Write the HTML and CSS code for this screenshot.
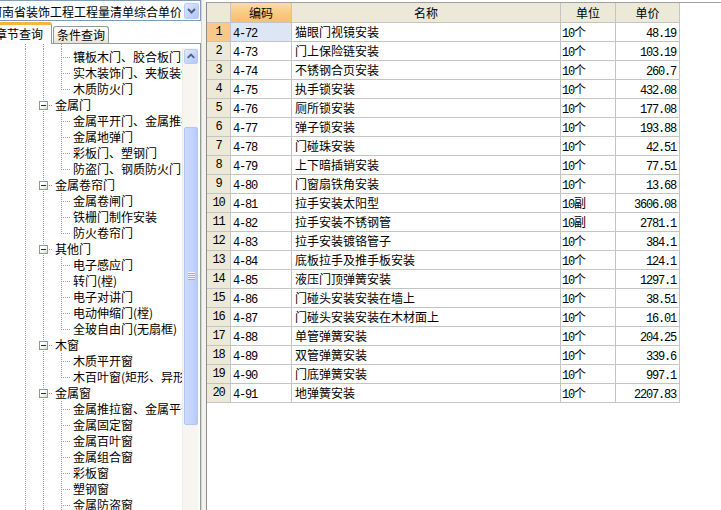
FILE: index.html
```html
<!DOCTYPE html>
<html>
<head>
<meta charset="utf-8">
<link rel="stylesheet" href="styles.css">
</head>
<body>
<div class="app">
  <div class="left">
    <div class="left-inner">
      <div class="combo">
        <span class="combo-text">河南省装饰工程工程量清单综合单价</span>
        <span class="combo-btn"><svg width="15" height="16" viewBox="0 0 15 16"><polyline points="4,6 7.5,9.5 11,6" fill="none" stroke="#4d6185" stroke-width="2"/></svg></span>
      </div>
      <div class="tabs">
        <div class="tab active">章节查询</div>
        <div class="tab">条件查询</div>
      </div>
      <div class="tabpage">
        <div class="tree">
          <div class="tr sp"><span class="g v"></span><span class="g v"></span><span class="g v"></span></div>
          <div class="tr"><span class="g v"></span><span class="g v"></span><span class="g t"></span><span class="tx">镶板木门、胶合板门</span></div>
          <div class="tr"><span class="g v"></span><span class="g v"></span><span class="g t"></span><span class="tx">实木装饰门、夹板装饰门</span></div>
          <div class="tr"><span class="g v"></span><span class="g v"></span><span class="g l"></span><span class="tx">木质防火门</span></div>
          <div class="tr"><span class="g v"></span><span class="g x"><span class="box"><span class="minus"></span></span></span><span class="tx">金属门</span></div>
          <div class="tr"><span class="g v"></span><span class="g v"></span><span class="g t"></span><span class="tx">金属平开门、金属推拉门</span></div>
          <div class="tr"><span class="g v"></span><span class="g v"></span><span class="g t"></span><span class="tx">金属地弹门</span></div>
          <div class="tr"><span class="g v"></span><span class="g v"></span><span class="g t"></span><span class="tx">彩板门、塑钢门</span></div>
          <div class="tr"><span class="g v"></span><span class="g v"></span><span class="g l"></span><span class="tx">防盗门、钢质防火门</span></div>
          <div class="tr"><span class="g v"></span><span class="g x"><span class="box"><span class="minus"></span></span></span><span class="tx">金属卷帘门</span></div>
          <div class="tr"><span class="g v"></span><span class="g v"></span><span class="g t"></span><span class="tx">金属卷闸门</span></div>
          <div class="tr"><span class="g v"></span><span class="g v"></span><span class="g t"></span><span class="tx">铁栅门制作安装</span></div>
          <div class="tr"><span class="g v"></span><span class="g v"></span><span class="g l"></span><span class="tx">防火卷帘门</span></div>
          <div class="tr"><span class="g v"></span><span class="g x"><span class="box"><span class="minus"></span></span></span><span class="tx">其他门</span></div>
          <div class="tr"><span class="g v"></span><span class="g v"></span><span class="g t"></span><span class="tx">电子感应门</span></div>
          <div class="tr"><span class="g v"></span><span class="g v"></span><span class="g t"></span><span class="tx">转门(樘)</span></div>
          <div class="tr"><span class="g v"></span><span class="g v"></span><span class="g t"></span><span class="tx">电子对讲门</span></div>
          <div class="tr"><span class="g v"></span><span class="g v"></span><span class="g t"></span><span class="tx">电动伸缩门(樘)</span></div>
          <div class="tr"><span class="g v"></span><span class="g v"></span><span class="g l"></span><span class="tx">全玻自由门(无扇框)</span></div>
          <div class="tr"><span class="g v"></span><span class="g x"><span class="box"><span class="minus"></span></span></span><span class="tx">木窗</span></div>
          <div class="tr"><span class="g v"></span><span class="g v"></span><span class="g t"></span><span class="tx">木质平开窗</span></div>
          <div class="tr"><span class="g v"></span><span class="g v"></span><span class="g l"></span><span class="tx">木百叶窗(矩形、异形)</span></div>
          <div class="tr"><span class="g v"></span><span class="g x"><span class="box"><span class="minus"></span></span></span><span class="tx">金属窗</span></div>
          <div class="tr"><span class="g v"></span><span class="g v"></span><span class="g t"></span><span class="tx">金属推拉窗、金属平开窗</span></div>
          <div class="tr"><span class="g v"></span><span class="g v"></span><span class="g t"></span><span class="tx">金属固定窗</span></div>
          <div class="tr"><span class="g v"></span><span class="g v"></span><span class="g t"></span><span class="tx">金属百叶窗</span></div>
          <div class="tr"><span class="g v"></span><span class="g v"></span><span class="g t"></span><span class="tx">金属组合窗</span></div>
          <div class="tr"><span class="g v"></span><span class="g v"></span><span class="g t"></span><span class="tx">彩板窗</span></div>
          <div class="tr"><span class="g v"></span><span class="g v"></span><span class="g t"></span><span class="tx">塑钢窗</span></div>
          <div class="tr"><span class="g v"></span><span class="g v"></span><span class="g t"></span><span class="tx">金属防盗窗</span></div>
          <div class="tr"><span class="g v"></span><span class="g v"></span><span class="g t"></span><span class="tx">防盗装饰窗</span></div>
        </div>
        <div class="vscroll">
          <div class="sb-btn"><svg width="15" height="15" viewBox="0 0 15 15"><polyline points="4,9 7.5,5.5 11,9" fill="none" stroke="#4d6185" stroke-width="2"/></svg></div>
          <div class="sb-gap"></div>
          <div class="sb-thumb"><span class="grip"></span></div>
        </div>
      </div>
    </div>
  </div>
  <div class="splitter"></div>
  <div class="right">
    <div class="grid">
      <div class="hc rn"></div><div class="hc sel">编码</div><div class="hc">名称</div><div class="hc">单位</div><div class="hc">单价</div>

      <div class="c rn cur">1</div><div class="c code cursel"><span class="n">4-72</span></div><div class="c name">猫眼门视镜安装</div><div class="c unit"><span class="n">10</span>个</div><div class="c price"><span class="n">48.19</span></div>
      <div class="c rn">2</div><div class="c code"><span class="n">4-73</span></div><div class="c name">门上保险链安装</div><div class="c unit"><span class="n">10</span>个</div><div class="c price"><span class="n">103.19</span></div>
      <div class="c rn">3</div><div class="c code"><span class="n">4-74</span></div><div class="c name">不锈钢合页安装</div><div class="c unit"><span class="n">10</span>个</div><div class="c price"><span class="n">260.7</span></div>
      <div class="c rn">4</div><div class="c code"><span class="n">4-75</span></div><div class="c name">执手锁安装</div><div class="c unit"><span class="n">10</span>个</div><div class="c price"><span class="n">432.08</span></div>
      <div class="c rn">5</div><div class="c code"><span class="n">4-76</span></div><div class="c name">厕所锁安装</div><div class="c unit"><span class="n">10</span>个</div><div class="c price"><span class="n">177.08</span></div>
      <div class="c rn">6</div><div class="c code"><span class="n">4-77</span></div><div class="c name">弹子锁安装</div><div class="c unit"><span class="n">10</span>个</div><div class="c price"><span class="n">193.88</span></div>
      <div class="c rn">7</div><div class="c code"><span class="n">4-78</span></div><div class="c name">门碰珠安装</div><div class="c unit"><span class="n">10</span>个</div><div class="c price"><span class="n">42.51</span></div>
      <div class="c rn">8</div><div class="c code"><span class="n">4-79</span></div><div class="c name">上下暗插销安装</div><div class="c unit"><span class="n">10</span>个</div><div class="c price"><span class="n">77.51</span></div>
      <div class="c rn">9</div><div class="c code"><span class="n">4-80</span></div><div class="c name">门窗扇铁角安装</div><div class="c unit"><span class="n">10</span>个</div><div class="c price"><span class="n">13.68</span></div>
      <div class="c rn">10</div><div class="c code"><span class="n">4-81</span></div><div class="c name">拉手安装太阳型</div><div class="c unit"><span class="n">10</span>副</div><div class="c price"><span class="n">3606.08</span></div>
      <div class="c rn">11</div><div class="c code"><span class="n">4-82</span></div><div class="c name">拉手安装不锈钢管</div><div class="c unit"><span class="n">10</span>副</div><div class="c price"><span class="n">2781.1</span></div>
      <div class="c rn">12</div><div class="c code"><span class="n">4-83</span></div><div class="c name">拉手安装镀铬管子</div><div class="c unit"><span class="n">10</span>个</div><div class="c price"><span class="n">384.1</span></div>
      <div class="c rn">13</div><div class="c code"><span class="n">4-84</span></div><div class="c name">底板拉手及推手板安装</div><div class="c unit"><span class="n">10</span>个</div><div class="c price"><span class="n">124.1</span></div>
      <div class="c rn">14</div><div class="c code"><span class="n">4-85</span></div><div class="c name">液压门顶弹簧安装</div><div class="c unit"><span class="n">10</span>个</div><div class="c price"><span class="n">1297.1</span></div>
      <div class="c rn">15</div><div class="c code"><span class="n">4-86</span></div><div class="c name">门碰头安装安装在墙上</div><div class="c unit"><span class="n">10</span>个</div><div class="c price"><span class="n">38.51</span></div>
      <div class="c rn">16</div><div class="c code"><span class="n">4-87</span></div><div class="c name">门碰头安装安装在木材面上</div><div class="c unit"><span class="n">10</span>个</div><div class="c price"><span class="n">16.01</span></div>
      <div class="c rn">17</div><div class="c code"><span class="n">4-88</span></div><div class="c name">单管弹簧安装</div><div class="c unit"><span class="n">10</span>个</div><div class="c price"><span class="n">204.25</span></div>
      <div class="c rn">18</div><div class="c code"><span class="n">4-89</span></div><div class="c name">双管弹簧安装</div><div class="c unit"><span class="n">10</span>个</div><div class="c price"><span class="n">339.6</span></div>
      <div class="c rn">19</div><div class="c code"><span class="n">4-90</span></div><div class="c name">门底弹簧安装</div><div class="c unit"><span class="n">10</span>个</div><div class="c price"><span class="n">997.1</span></div>
      <div class="c rn">20</div><div class="c code"><span class="n">4-91</span></div><div class="c name">地弹簧安装</div><div class="c unit"><span class="n">10</span>个</div><div class="c price"><span class="n">2207.83</span></div>
    </div>
  </div>
</div>
</body>
</html>
```

FILE: styles.css
```css
:root {
  --vd: repeating-linear-gradient(to bottom, #9a9a9a 0 1px, transparent 1px 2px);
  --hd: repeating-linear-gradient(to right, #9a9a9a 0 1px, transparent 1px 2px);
}
* { box-sizing: border-box; }
body {
  margin: 0;
  background: #fff;
  font-family: "Noto Sans CJK SC", "Noto Sans", sans-serif;
  font-size: 12px;
  color: #000;
}
.app {
  display: flex;
  width: 721px;
  height: 510px;
  overflow: hidden;
}
.left {
  flex: none;
  width: 201px;
  height: 510px;
  overflow: hidden;
}
.left-inner {
  margin-left: -12px;
  width: 213px;
  height: 510px;
  display: flex;
  flex-direction: column;
}
.combo {
  flex: none;
  height: 21px;
  border: 1px solid #7f9db9;
  display: flex;
  align-items: center;
  background: #fff;
}
.combo-text {
  flex: 1;
  overflow: hidden;
  white-space: nowrap;
  padding-left: 1px;
  line-height: 19px;
  padding-top: 2px;
}
.combo-btn {
  flex: none;
  width: 15px;
  height: 16px;
  margin-right: 1px;
  margin-left: 3px;
  border: 1px solid #b9cbf5;
  border-radius: 2px;
  background: linear-gradient(135deg, #dfe8fd 0%, #c3d3fb 55%, #b2c6f5 100%);
  display: flex;
}
.combo-btn svg { margin: -1px; }
.tabs {
  flex: none;
  height: 21px;
  margin-top: 1px;
  display: flex;
  align-items: flex-end;
}
.tab {
  height: 17px;
  padding: 0 3px;
  margin-left: 1px;
  border: 1px solid #919b9c;
  border-bottom: none;
  border-radius: 3px 3px 0 0;
  background: linear-gradient(#ffffff, #f0efe8 70%, #e4e2d8);
  line-height: 16px;
  white-space: nowrap;
}
.tab.active {
  position: relative;
  z-index: 1;
  height: 22px;
  margin-bottom: -1px;
  margin-left: 0;
  padding: 0 8px 0 6px;
  border-top: 3px solid #f4b63c;
  background: #fcfcfe;
  line-height: 18px;
}
.tabpage {
  flex: 1;
  min-height: 0;
  display: flex;
  border-top: 1px solid #919b9c;
  border-left: 1px solid #919b9c;
  border-right: 1px solid #919b9c;
  background: #fff;
}
.tree {
  flex: 1;
  min-width: 0;
  overflow: hidden;
}
.tr {
  display: flex;
  height: 16px;
  padding-left: 27px;
  white-space: nowrap;
}
.tr.sp { height: 5px; }
.g {
  flex: none;
  width: 18px;
  height: 100%;
}
.g.v { background: var(--vd) 9px 0 / 1px 100% no-repeat; }
.g.t { background: var(--hd) 11px 8px / 7px 1px no-repeat, var(--vd) 9px 0 / 1px 100% no-repeat; }
.g.l { background: var(--hd) 11px 8px / 7px 1px no-repeat, var(--vd) 9px 0 / 1px 9px no-repeat; }
.g.x {
  display: flex;
  align-items: flex-start;
  background: var(--hd) 15px 8px / 3px 1px no-repeat, var(--vd) 9px 0 / 1px 100% no-repeat;
}
.box {
  width: 9px;
  height: 9px;
  margin: 4px 0 0 5px;
  border: 1px solid #8c9aa8;
  background: linear-gradient(135deg, #ffffff 30%, #dedbd0 100%);
  display: flex;
  align-items: center;
  justify-content: center;
}
.minus {
  width: 5px;
  height: 1px;
  background: #1a2a4a;
}
.tx {
  margin-left: 3px;
  line-height: 16px;
}
.vscroll {
  flex: none;
  width: 16px;
  margin: 4px 2px 0 0;
  display: flex;
  flex-direction: column;
  background: #f6f5f0;
  border-left: 1px solid #eeede6;
}
.sb-btn {
  flex: none;
  height: 15px;
  margin: 1px 0 0 1px;
  width: 14px;
  border: 1px solid #b9cbf5;
  border-radius: 2px;
  background: linear-gradient(135deg, #e2eafd 0%, #c5d5fb 55%, #b4c8f6 100%);
  display: flex;
}
.sb-btn svg { margin: -1px; }
.sb-gap { flex: none; height: 63px; }
.sb-thumb {
  flex: none;
  height: 298px;
  width: 14px;
  margin-left: 1px;
  border: 1px solid #b1c4f3;
  border-radius: 2px;
  background: linear-gradient(to right, #ccdafd, #c2d3fb 60%, #b8caf4);
  display: flex;
  align-items: center;
  justify-content: center;
}
.grip {
  width: 7px;
  height: 8px;
  background: repeating-linear-gradient(to bottom, #eef3fe 0 1px, #8eaef0 1px 2px);
}
.splitter {
  flex: none;
  width: 5px;
  background: #f3f2ec;
  border-left: 1px solid #d8d6cc;
}
.right {
  flex: 1;
  margin-top: 2px;
  border-top: 1px solid #a0a0a0;
  border-left: 1px solid #8c8c8c;
  background: #fff;
}
.grid {
  display: grid;
  grid-template-columns: 24px 61px 269px 55px 64px;
  grid-template-rows: 20px;
  grid-auto-rows: 19px;
  width: 473px;
}
.hc, .c {
  border-right: 1px solid #c4c4c4;
  border-bottom: 1px solid #c4c4c4;
  white-space: nowrap;
  overflow: hidden;
}
.hc {
  background: #ece9d8;
  text-align: center;
  line-height: 19px;
}
.hc.sel {
  background: linear-gradient(#fbdca3, #f8cb82 50%, #f6c06e);
}
.c {
  line-height: 18px;
  padding: 0 2px;
}
.c.rn {
  background: #ece9d8;
  text-align: center;
  padding: 0;
}
.c.rn.cur { background: #f9c88c; }
.c.cursel { background: #dce6f5; }
.c.name { padding-left: 3px; }
.c.unit { padding-left: 1px; }
.c.price { text-align: right; padding-right: 3px; }
.n, .c.rn {
  font-family: "Liberation Mono", "DejaVu Sans Mono", monospace;
  font-size: 12px;
  letter-spacing: -1.2px;
}
```
